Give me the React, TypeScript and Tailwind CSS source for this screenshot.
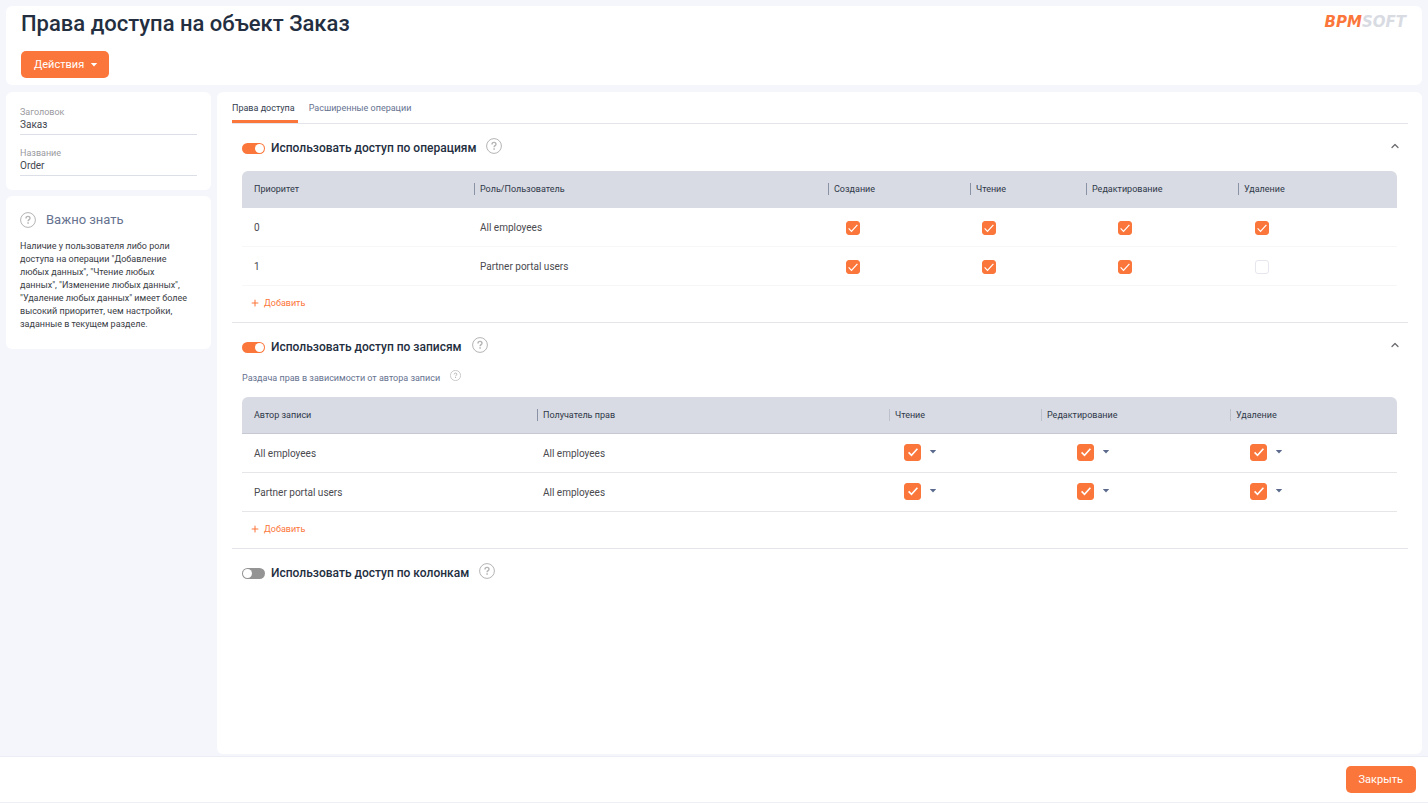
import React from "react";
import { ChevronUp, Plus } from "lucide-react";
import clsx from "clsx";

type Column = {
  title: string;
  width: string; // ancho de la columna, vacío = ocupa lo que sobra
  pad: string; // sangría del contenido de la celda
};

type Row = {
  cells: string[];
  rights: boolean[];
};

const OPERATION_COLUMNS: Column[] = [
  { title: "Приоритет", width: "w-[232px]", pad: "pl-3" },
  { title: "Роль/Пользователь", width: "", pad: "pl-1.5" },
  { title: "Создание", width: "w-[142px]", pad: "pl-[18px]" },
  { title: "Чтение", width: "w-[116px]", pad: "pl-3" },
  { title: "Редактирование", width: "w-[152px]", pad: "pl-8" },
  { title: "Удаление", width: "w-[159px]", pad: "pl-[17px]" },
];

const OPERATION_ROWS: Row[] = [
  { cells: ["0", "All employees"], rights: [true, true, true, true] },
  { cells: ["1", "Partner portal users"], rights: [true, true, true, false] },
];

const RECORD_COLUMNS: Column[] = [
  { title: "Автор записи", width: "w-[295px]", pad: "pl-3" },
  { title: "Получатель прав", width: "", pad: "pl-1.5" },
  { title: "Чтение", width: "w-[152px]", pad: "pl-[15px]" },
  { title: "Редактирование", width: "w-[189px]", pad: "pl-9" },
  { title: "Удаление", width: "w-[167px]", pad: "pl-5" },
];

const RECORD_ROWS: Row[] = [
  { cells: ["All employees", "All employees"], rights: [true, true, true] },
  { cells: ["Partner portal users", "All employees"], rights: [true, true, true] },
];

function Caret({ className }: { className?: string }) {
  return (
    <svg viewBox="0 0 8 4" className={clsx("h-1 w-2", className)} fill="currentColor" aria-hidden="true">
      <path d="M0.8 0h6.4L4 3.6z" />
    </svg>
  );
}

function HelpIcon({ className }: { className?: string }) {
  return (
    <svg viewBox="0 0 16 16" className={clsx("shrink-0 text-[#b4b4b4]", className)} fill="none" stroke="currentColor" aria-hidden="true">
      <circle cx="8" cy="8" r="7.4" />
      <path d="M6 6.4c0-1.2.9-2 2-2s2 .8 2 1.8c0 1.4-1.9 1.5-1.9 3" strokeWidth="1.4" />
      <path d="M8.1 10.3v1.5" strokeWidth="1.5" />
    </svg>
  );
}

function CheckBox({ label, checked, large }: { label: string; checked: boolean; large?: boolean }) {
  return (
    <span className="inline-grid place-items-center align-middle">
      <input
        type="checkbox"
        aria-label={label}
        defaultChecked={checked}
        className={clsx(
          "peer col-start-1 row-start-1 appearance-none rounded-[3px] border border-[#e6e7ee] bg-white checked:border-[#fb763a] checked:bg-[#fb763a]",
          large ? "size-[17px]" : "size-[14px]"
        )}
      />
      <svg
        viewBox="0 0 12 12"
        className="pointer-events-none invisible col-start-1 row-start-1 size-3 text-white peer-checked:visible"
        fill="none"
        stroke="currentColor"
        strokeWidth={large ? 1.6 : 1.2}
        aria-hidden="true"
      >
        <path d="M1.6 6.4l2.9 3L10.4 2.8" />
      </svg>
    </span>
  );
}

function RightsTable({ name, columns, rows, withMenu }: { name: string; columns: Column[]; rows: Row[]; withMenu?: boolean }) {
  const line = withMenu ? "border-[#e6e6e8]" : "border-[#f7f7f8]";

  return (
    <table aria-label={name} className="w-full table-fixed border-separate border-spacing-0 text-left">
      <thead>
        <tr className="h-[37px] text-[9px]">
          {columns.map((col, i) => (
            <th
              key={col.title}
              className={clsx(
                "border-b bg-[#d8dbe3] p-0 font-normal text-[#2f3849] first:rounded-tl-md last:rounded-tr-md",
                withMenu ? "border-[#c6c9d1]" : "border-[#d8dbe3]",
                col.width
              )}
            >
              <span
                className={clsx(
                  "flex h-3 items-center pt-0.5",
                  i === 0 ? "pl-3" : "border-l pl-[5px]",
                  withMenu && i > 1 ? "border-[#bcc1cc]" : "border-[#8a93a6]"
                )}
              >
                {col.title}
              </span>
            </th>
          ))}
        </tr>
      </thead>
      <tbody>
        {rows.map((row) => (
          <tr key={row.cells.join()} className="h-[39px] text-[10px] text-[#4a4a4f]">
            {row.cells.map((cell, i) => (
              <td key={i} className={clsx("border-b p-0", line, columns[i].pad)}>
                {cell}
              </td>
            ))}
            {row.rights.map((checked, i) => {
              const col = columns[i + row.cells.length];
              return (
                <td key={col.title} className={clsx("border-b p-0", line, col.pad)}>
                  <span className={clsx("flex items-center gap-2", withMenu ? "pb-0.5" : "pt-px")}>
                    <CheckBox label={`${row.cells.join(", ")}: ${col.title}`} checked={checked} large={withMenu} />
                    {withMenu && (
                      <button type="button" aria-label={`${col.title}: меню`} className="text-[#5b6a8c]">
                        <Caret />
                      </button>
                    )}
                  </span>
                </td>
              );
            })}
          </tr>
        ))}
      </tbody>
    </table>
  );
}

function Section({ id, title, enabled, children }: { id: string; title: string; enabled?: boolean; children?: React.ReactNode }) {
  const [open, setOpen] = React.useState(true);

  return (
    <section className="border-b border-[#e4e5ea] pr-[11px] pl-[10px] last:border-b-0">
      <div className="flex h-[47px] items-center pt-px">
        <input
          id={id}
          type="checkbox"
          role="switch"
          defaultChecked={enabled}
          className="h-[11px] w-[23px] appearance-none rounded-full bg-[#949494] p-px before:block before:size-[9px] before:rounded-full before:bg-white checked:bg-[#fb763a] checked:before:translate-x-3"
        />
        <label htmlFor={id} className="ml-1.5 text-xs font-medium text-[#232e40]">
          {title}
        </label>
        <button type="button" aria-label="Справка" className="mb-1 ml-2.5">
          <HelpIcon className="size-4" />
        </button>
        {children && (
          <button type="button" aria-label="Свернуть" className="mb-1 -mr-1 ml-auto text-[#6b6b70]" onClick={() => setOpen(!open)}>
            <ChevronUp className={clsx("size-3", !open && "rotate-180")} strokeWidth={2.5} />
          </button>
        )}
      </div>
      {open && children}
    </section>
  );
}

function AddButton() {
  return (
    <button type="button" className="ml-2 flex h-9 items-center gap-1 pb-0.5 text-[9px] text-[#fb763a]">
      <Plus className="size-2.5" strokeWidth={2.5} />
      <span className="pt-px">Добавить</span>
    </button>
  );
}

function Field({ id, label, value }: { id: string; label: string; value: string }) {
  return (
    <div className="flex flex-col">
      <label htmlFor={id} className="text-[9px] leading-3 text-[#9a9aa0]">
        {label}
      </label>
      <input id={id} defaultValue={value} className="h-[17px] w-full border-b border-[#dcdee8] pb-1 text-[10px] text-[#44474f] outline-none" />
    </div>
  );
}

export default function App() {
  return (
    <div className="flex min-h-screen flex-col bg-[#f5f6fb] font-[Roboto,sans-serif]">
      <header className="mx-1.5 mt-1.5 flex h-[79px] items-start justify-between rounded-md bg-white pr-4 pl-[15px]">
        <div>
          <h1 className="mt-[3px] text-[22px] leading-[30px] font-medium text-[#232e40]">Права доступа на объект Заказ</h1>
          <button
            type="button"
            className="mt-3 flex h-[27px] items-center gap-1.5 rounded-[5px] bg-[#fb763a] pt-px pr-[11px] pl-[13px] text-[11px] text-white"
          >
            Действия
            <Caret />
          </button>
        </div>
        <div className="mt-2 font-['DejaVu_Sans',sans-serif] text-[15px] leading-4 font-bold text-[#d9dbe3] italic">
          <span className="text-[#fb763a]">BPM</span>SOFT
        </div>
      </header>

      <div className="mx-1.5 mt-[7px] flex flex-1 gap-1.5">
        <aside className="flex w-[205px] shrink-0 flex-col gap-1.5">
          <div className="flex h-[98px] flex-col gap-3 rounded-md bg-white px-3.5 pt-3.5">
            <Field id="caption" label="Заголовок" value="Заказ" />
            <Field id="name" label="Название" value="Order" />
          </div>
          <div className="rounded-md bg-white px-3.5 pt-3.5 pb-[18px]">
            <h2 className="flex items-center gap-2.5 text-[13px] leading-5 text-[#66728f]">
              <HelpIcon className="size-4" />
              Важно знать
            </h2>
            <p className="mt-[10px] text-[9px] leading-[13px] text-[#3a3d45]">
              Наличие у пользователя либо роли
              <br />
              доступа на операции "Добавление
              <br />
              любых данных", "Чтение любых
              <br />
              данных", "Изменение любых данных",
              <br />
              "Удаление любых данных" имеет более
              <br />
              высокий приоритет, чем настройки,
              <br />
              заданные в текущем разделе.
            </p>
          </div>
        </aside>

        <main className="min-w-0 flex-1 rounded-md bg-white pr-3.5 pl-[15px]">
          <nav className="flex h-8 gap-[11px] border-b border-[#e4e5ea] text-[9px] leading-4">
            <a href="#rights" className="border-b-3 border-[#fb763a] pt-2 pr-[3px] text-[#343d4f]">
              Права доступа
            </a>
            <a href="#extended" className="pt-2 text-[#66728f]">
              Расширенные операции
            </a>
          </nav>

          <Section id="by-operations" title="Использовать доступ по операциям" enabled>
            <RightsTable name="Доступ по операциям" columns={OPERATION_COLUMNS} rows={OPERATION_ROWS} />
            <AddButton />
          </Section>

          <Section id="by-records" title="Использовать доступ по записям" enabled>
            <div className="flex h-[27px] items-start gap-2.5 text-[9px] leading-4 text-[#66728f]">
              Раздача прав в зависимости от автора записи
              <HelpIcon className="size-[11px]" />
            </div>
            <RightsTable name="Доступ по записям" columns={RECORD_COLUMNS} rows={RECORD_ROWS} withMenu />
            <AddButton />
          </Section>

          <Section id="by-columns" title="Использовать доступ по колонкам" />
        </main>
      </div>

      <footer className="mt-0.5 flex h-[47px] items-center justify-end border-y border-[#eceef5] bg-white pr-3">
        <button type="button" className="h-[27px] rounded-[5px] bg-[#fb763a] px-[13px] pt-0.5 text-[11px] text-white">
          Закрыть
        </button>
      </footer>
    </div>
  );
}
